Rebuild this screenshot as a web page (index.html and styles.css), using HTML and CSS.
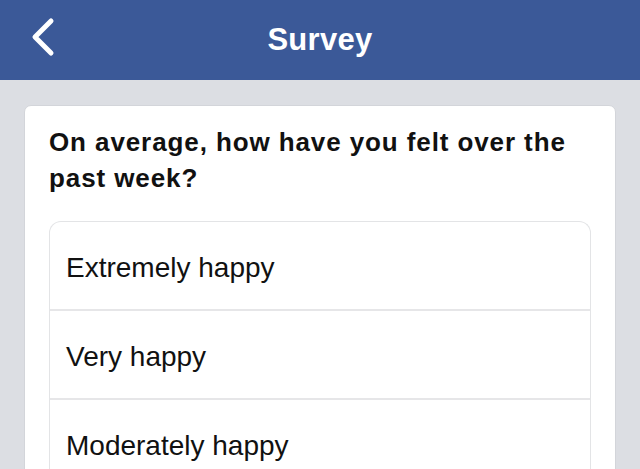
FILE: index.html
```html
<!DOCTYPE html>
<html>
<head>
<meta charset="utf-8">
<link rel="stylesheet" href="styles.css">
</head>
<body>
<header class="topbar">
  <button class="back" aria-label="Back">
    <svg width="24" height="40" viewBox="0 0 24 40"><path d="M20 4 L4 20 L20 36" fill="none" stroke="#fff" stroke-width="5" stroke-linecap="round" stroke-linejoin="round"/></svg>
  </button>
  <h1 class="title">Survey</h1>
</header>
<main class="content">
  <section class="card">
    <h2 class="question">On average, how have you felt over the past week?</h2>
    <ul class="options">
      <li class="option">Extremely happy</li>
      <li class="option">Very happy</li>
      <li class="option">Moderately happy</li>
    </ul>
  </section>
</main>
</body>
</html>
```
FILE: styles.css
```css
* { box-sizing: border-box; }
html, body { margin: 0; padding: 0; }
body {
  background: #dcdee3;
  font-family: "Liberation Sans", Arial, sans-serif;
  color: #111;
  height: 469px;
  overflow: hidden;
}
.topbar {
  height: 80px;
  background: #3b5998;
  display: flex;
  align-items: center;
  justify-content: center;
  position: relative;
}
.back {
  position: absolute;
  left: 31px;
  top: 17px;
  background: none;
  border: 0;
  padding: 0;
  width: 24px;
  height: 40px;
}
.back svg { display: block; }
.title {
  margin: 0;
  color: #fff;
  font-size: 31px;
  font-weight: bold;
  letter-spacing: 0.3px;
}
.content {
  padding: 25px 24px 0;
}
.card {
  background: #fff;
  border-radius: 7px;
  border: 1px solid #d3d5da;
  padding: 18px 24px 0;
}
.question {
  margin: 0 0 25px;
  font-size: 26px;
  line-height: 36px;
  font-weight: bold;
  letter-spacing: 0.9px;
  color: #111;
}
.options {
  list-style: none;
  margin: 0;
  padding: 0;
  border: 1px solid #e3e4e6;
  border-bottom: 0;
  border-radius: 12px 12px 0 0;
}
.option {
  height: 89px;
  display: flex;
  align-items: center;
  padding: 4px 16px 0;
  font-size: 28px;
  border-bottom: 2px solid #e6e6e8;
  color: #111;
}
```
